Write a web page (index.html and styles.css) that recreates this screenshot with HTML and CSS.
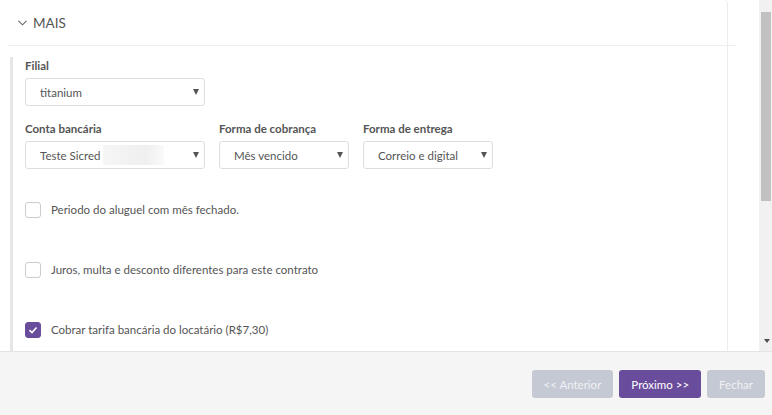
FILE: index.html
```html
<!DOCTYPE html>
<html lang="pt-BR">
<head>
    <meta charset="UTF-8">
    <meta name="viewport" content="width=device-width, initial-scale=1.0">
    <title>Contrato</title>
    <link rel="stylesheet" href="styles.css">
</head>
<body>
    <div class="modal">
        <div class="modal-body">
            <div class="content">
                <div class="card">
                    <!-- cabeçalho da seção -->
                    <div class="card-header">
                        <svg class="chevron" width="9" height="6" viewBox="0 0 9 6"><polyline points="0.5,0.8 4.5,4.8 8.5,0.8" fill="none" stroke="#666" stroke-width="1.1"/></svg>
                        <span>MAIS</span>
                    </div>

                    <div class="fields">
                        <div class="form-group">
                            <label>Filial</label>
                            <div class="select wide">titanium</div>
                        </div>

                        <div class="form-row">
                            <div class="form-group">
                                <label>Conta bancária</label>
                                <div class="select wide">Teste Sicred <span class="redacted"></span></div>
                            </div>
                            <div class="form-group">
                                <label>Forma de cobrança</label>
                                <div class="select">Mês vencido</div>
                            </div>
                            <div class="form-group">
                                <label>Forma de entrega</label>
                                <div class="select">Correio e digital</div>
                            </div>
                        </div>

                        <div class="check-row first">
                            <span class="checkbox"></span>
                            <span>Periodo do aluguel com mês fechado.</span>
                        </div>
                        <div class="check-row">
                            <span class="checkbox"></span>
                            <span>Juros, multa e desconto diferentes para este contrato</span>
                        </div>
                        <div class="check-row">
                            <span class="checkbox checked">
                                <svg width="10" height="8" viewBox="0 0 10 8"><polyline points="1.5,4.2 4,6.5 8.5,1.5" fill="none" stroke="#fff" stroke-width="1.6"/></svg>
                            </span>
                            <span>Cobrar tarifa bancária do locatário (R$7,30)</span>
                        </div>
                    </div>
                </div>
            </div>

            <!-- barra de rolagem -->
            <div class="scrollbar">
                <div class="scroll-up"></div>
                <div class="scroll-track">
                    <div class="scroll-thumb"></div>
                </div>
                <div class="scroll-down"></div>
            </div>
        </div>

        <div class="modal-footer">
            <button class="btn btn-gray">&lt;&lt; Anterior</button>
            <button class="btn btn-primary">Próximo &gt;&gt;</button>
            <button class="btn btn-gray">Fechar</button>
        </div>
    </div>
</body>
</html>
```

FILE: styles.css
```css
:root {
    --primary-color: #6a4c9c;
    --text-color: #555555;
    --border-color: #ececec;
}

body {
    margin: 0;
    font-family: Lato, 'Open Sans', sans-serif;
    font-size: 11.5px;
    color: var(--text-color);
    background: #ffffff;
}

.modal {
    width: 772px;
    height: 415px;
    display: flex;
    flex-direction: column;
}

.modal-body {
    height: 351px;
    display: flex;
    background: #ffffff;
}

.content {
    flex: 1;
    overflow: hidden;
}

.card {
    margin-left: 8px;
    width: 719px;
    height: 100%;
    border-right: 1px solid var(--border-color);
    border-top-right-radius: 4px;
}

.card-header {
    height: 45px;
    margin-right: -9px;
    border-bottom: 1px solid #eeeeee;
    display: flex;
    align-items: center;
    padding-left: 10px;
    font-size: 13.5px;
    color: #555;
    gap: 6px;
}

.chevron {
    margin-top: 1px;
}

.fields {
    margin-top: 11px;
    margin-left: 2px;
    border-left: 3px solid #e6e6e6;
    padding-left: 12px;
    height: 300px;
}

.form-row {
    display: flex;
    gap: 14px;
    margin-top: 14px;
}

.form-group label {
    display: block;
    font-weight: 700;
    line-height: 18px;
    margin-bottom: 3px;
    color: #555;
}

.select {
    position: relative;
    box-sizing: border-box;
    width: 130px;
    height: 28px;
    border: 1px solid #dedede;
    border-radius: 3px;
    padding-left: 14px;
    display: flex;
    align-items: center;
    white-space: nowrap;
    color: #555;
}

.select.wide {
    width: 180px;
}

.select::after {
    content: "";
    position: absolute;
    right: 5px;
    top: 10px;
    border-left: 3.5px solid transparent;
    border-right: 3.5px solid transparent;
    border-top: 6px solid #555;
}

.redacted {
    display: inline-block;
    width: 61px;
    height: 20px;
    margin-left: 3px;
    background: linear-gradient(90deg, #f6f6f6, #efefef 70%, #fafafa);
}

.check-row {
    display: flex;
    align-items: center;
    gap: 10px;
    height: 16px;
    margin-top: 44px;
    line-height: 16px;
}

.check-row.first {
    margin-top: 33px;
}

.checkbox {
    box-sizing: border-box;
    width: 16px;
    height: 16px;
    border: 1px solid #cccccc;
    border-radius: 3px;
    display: flex;
    align-items: center;
    justify-content: center;
    flex-shrink: 0;
}

.checkbox.checked {
    background: var(--primary-color);
    border-color: var(--primary-color);
}

.scrollbar {
    width: 13px;
    margin-left: 2px;
    background: #f1f1f1;
    display: flex;
    flex-direction: column;
}

.scroll-up {
    height: 12px;
}

.scroll-track {
    flex: 1;
    padding: 0 1px 0 2px;
}

.scroll-thumb {
    height: 189px;
    background: #c1c1c1;
}

.scroll-down {
    height: 14px;
    display: flex;
    justify-content: center;
    padding-left: 2px;
}

.scroll-down::after {
    content: "";
    margin-top: 2px;
    border-left: 3.5px solid transparent;
    border-right: 3.5px solid transparent;
    border-top: 4px solid #505050;
    height: 0;
}

.modal-footer {
    flex: 1;
    background: #f5f5f5;
    border-top: 1px solid #e4e4e4;
    display: flex;
    justify-content: flex-end;
    align-items: flex-start;
    padding: 18px 7px 0 0;
    gap: 6px;
}

.btn {
    height: 28px;
    padding: 0 12px;
    border: none;
    border-radius: 3px;
    font-family: Lato, 'Open Sans', sans-serif;
    font-size: 11.5px;
    color: #ffffff;
    cursor: pointer;
}

.btn-gray {
    background: #c5c9d3;
    color: #f0f1f5;
}

.btn-primary {
    background: var(--primary-color);
}
```
